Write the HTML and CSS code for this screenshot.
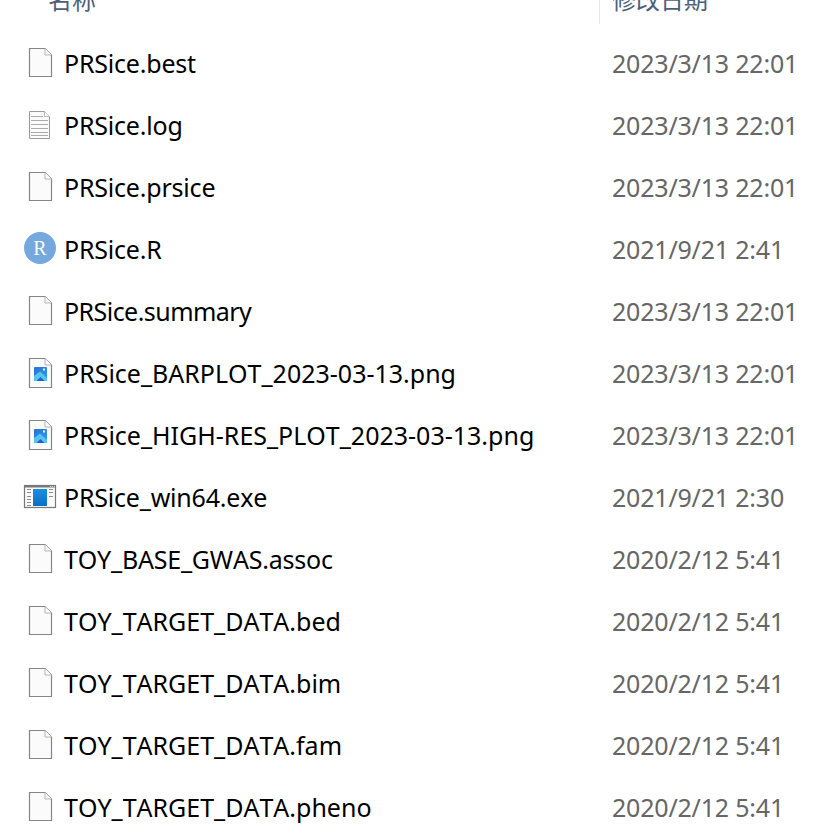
FILE: index.html
```html
<!DOCTYPE html>
<html lang="zh-CN">

<head>
    <meta charset="UTF-8">
    <title>PRSice</title>
    <link rel="stylesheet" href="styles.css">
</head>

<body>
    <svg class="defs" width="0" height="0">
        <defs>
            <linearGradient id="sky" x1="0" y1="0" x2="1" y2="1">
                <stop offset="0" stop-color="#2a6fd8"/>
                <stop offset="1" stop-color="#2f9fe8"/>
            </linearGradient>
            <linearGradient id="screen" x1="0" y1="0" x2="0" y2="1">
                <stop offset="0" stop-color="#1a8fe2"/>
                <stop offset="1" stop-color="#0b6ec6"/>
            </linearGradient>
        </defs>
        <symbol id="page" viewBox="0 0 40 40">
            <path d="M9.500 5.500H25L31.500 12V33.500H9.500Z" fill="#fbfbfb" stroke="#858585" stroke-width="1.200"/>
            <path d="M25 5.500V12H31.500" fill="#fff" stroke="#b4b4b4"/>
        </symbol>
        <symbol id="log" viewBox="0 0 40 40">
            <path d="M9.500 6.500H24.500L29.500 11.500V33.500H9.500Z" fill="#fbfbfb" stroke="#9a9a9a"/>
            <path d="M24.500 6.500V11.500H29.500" fill="#fff" stroke="#bdbdbd"/>
            <path d="M11 11.500H23M11 15.500H28M11 19.500H28M11 23.500H28M11 27.500H28M11 30.500H28" stroke="#ababab" fill="none"/>
        </symbol>
        <symbol id="r" viewBox="0 0 40 40">
            <circle cx="20" cy="19" r="16" fill="#75a8dc"/>
            <text x="20" y="25.500" text-anchor="middle" class="r-letter">R</text>
        </symbol>
        <symbol id="png" viewBox="0 0 40 40">
            <path d="M9.500 5.500H25L31.500 12V34.500H9.500Z" fill="#fbfbfb" stroke="#858585" stroke-width="1.200"/>
            <path d="M25 5.500V12H31.500" fill="#fff" stroke="#b4b4b4"/>
            <rect x="14" y="14" width="13" height="14" rx="1" fill="url(#sky)"/>
            <path d="M14 27V23L20 18.500L27 25V27Q27 28 26 28H15Q14 28 14 27Z" fill="#55c4f0"/>
            <path d="M16.500 28L20.500 24L24.500 28Z" fill="#1f62cc"/>
            <path d="M23 15.500h2v2h-2z" fill="#eaf3fc"/>
        </symbol>
        <symbol id="exe" viewBox="0 0 40 40">
            <rect x="4.500" y="8.500" width="31" height="22" fill="#fafafa" stroke="#777" stroke-width="1.200"/>
            <rect x="5" y="9" width="30" height="1.500" fill="#777"/>
            <path d="M30 9.500h1M32 9.500h1M34 9.500h1" stroke="#ddd" fill="none"/>
            <rect x="13" y="12" width="14" height="17" fill="url(#screen)"/>
            <path d="M7 12.500H11M7 15.500H11M7 19.500H11M7 22.500H11M7 25.500H11M7 28.500H11M29 12.500H33M29 15.500H33M29 19.500H33" stroke="#8c8c8c" fill="none"/>
        </symbol>
    </svg>

    <div class="header">
        <div class="col-name"><span>名称</span></div>
        <div class="col-date"><span>修改日期</span></div>
    </div>

    <div class="list">
        <div class="row"><svg class="icon"><use href="#page"/></svg><span class="name tight">PRSice.best</span><span class="date">2023/3/13 22:01</span></div>
        <div class="row"><svg class="icon"><use href="#log"/></svg><span class="name tight">PRSice.log</span><span class="date">2023/3/13 22:01</span></div>
        <div class="row"><svg class="icon"><use href="#page"/></svg><span class="name tight">PRSice.prsice</span><span class="date">2023/3/13 22:01</span></div>
        <div class="row"><svg class="icon"><use href="#r"/></svg><span class="name tight">PRSice.R</span><span class="date">2021/9/21 2:41</span></div>
        <div class="row"><svg class="icon"><use href="#page"/></svg><span class="name tighter">PRSice.summary</span><span class="date">2023/3/13 22:01</span></div>
        <div class="row"><svg class="icon"><use href="#png"/></svg><span class="name">PRSice_BARPLOT_2023-03-13.png</span><span class="date">2023/3/13 22:01</span></div>
        <div class="row"><svg class="icon"><use href="#png"/></svg><span class="name">PRSice_HIGH-RES_PLOT_2023-03-13.png</span><span class="date">2023/3/13 22:01</span></div>
        <div class="row"><svg class="icon"><use href="#exe"/></svg><span class="name tight">PRSice_win64.exe</span><span class="date">2021/9/21 2:30</span></div>
        <div class="row"><svg class="icon"><use href="#page"/></svg><span class="name tight">TOY_BASE_GWAS.assoc</span><span class="date">2020/2/12 5:41</span></div>
        <div class="row"><svg class="icon"><use href="#page"/></svg><span class="name">TOY_TARGET_DATA.bed</span><span class="date">2020/2/12 5:41</span></div>
        <div class="row"><svg class="icon"><use href="#page"/></svg><span class="name">TOY_TARGET_DATA.bim</span><span class="date">2020/2/12 5:41</span></div>
        <div class="row"><svg class="icon"><use href="#page"/></svg><span class="name">TOY_TARGET_DATA.fam</span><span class="date">2020/2/12 5:41</span></div>
        <div class="row"><svg class="icon"><use href="#page"/></svg><span class="name">TOY_TARGET_DATA.pheno</span><span class="date">2020/2/12 5:41</span></div>
    </div>
</body>

</html>
```
FILE: styles.css
```css
* {
    box-sizing: border-box;
}

html,
body {
    height: 836px;
    overflow: hidden;
}

body {
    margin: 0;
    background-color: #fff;
    font-family: "Noto Sans", "Noto Sans CJK SC", sans-serif;
    font-size: 24px;
}

.defs {
    display: block;
    height: 0;
}

.r-letter {
    fill: #fff;
    font-family: "Liberation Serif", serif;
    font-size: 20px;
}

.header {
    display: flex;
    height: 24px;
    color: #4c607a;
    line-height: 24px;
}

.col-name,
.col-date {
    display: flex;
    align-items: flex-end;
    padding-bottom: 12px;
}

.col-name {
    width: 599px;
    padding-left: 48px;
}

.col-date {
    padding-left: 12px;
    border-left: 1px solid #e5e5e5;
}

.list {
    padding-top: 8px;
}

.row {
    display: flex;
    align-items: center;
    height: 62px;
    padding-left: 20px;
    font-size: 25px;
    font-kerning: none;
}

.icon {
    flex: none;
    width: 40px;
    height: 40px;
    margin-right: 4px;
}

.name {
    width: 548px;
    color: #000;
    white-space: nowrap;
}

/* lowercase runs a little narrower in the reference */
.tight {
    letter-spacing: -0.2px;
}

.tighter {
    letter-spacing: -0.55px;
}

.date {
    color: #666;
    letter-spacing: -0.2px;
    white-space: nowrap;
}
```
